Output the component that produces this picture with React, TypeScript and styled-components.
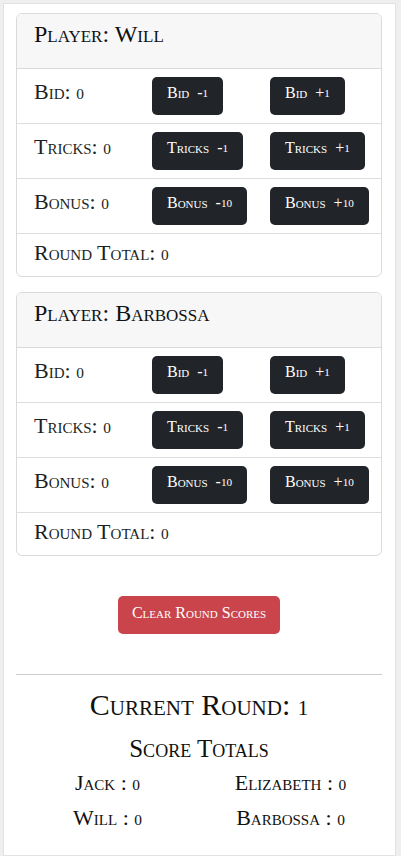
import React from "react";
import styled, { createGlobalStyle } from "styled-components";

const GlobalStyle = createGlobalStyle`
  html, body {
    margin: 0;
    padding: 0;
    background: #efefef;
  }
  body {
    font-family: "Liberation Serif", "Times New Roman", serif;
    font-variant: small-caps;
    color: #1c1f23;
  }
  * { box-sizing: border-box; }
`;

const Page = styled.div`
  width: 393px;
  margin: 3px;
  background: #ffffff;
  border: 1px solid #e2e2e2;
  padding: 9px 13px 20px 12px;
`;

const PlayerCard = styled.section`
  border: 1px solid #dadada;
  border-radius: 6px;
  overflow: hidden;
  & + & {
    margin-top: 15px;
  }
`;

const CardHeader = styled.h4`
  margin: 0;
  background: #f7f7f7;
  border-bottom: 1px solid #dadada;
  padding: 5px 17px 19px;
  font-size: 24px;
  line-height: 30px;
  font-weight: normal;
  color: #111;
`;

const Row = styled.div<{ $last?: boolean }>`
  display: grid;
  grid-template-columns: 118px 118px 1fr;
  align-items: center;
  padding: ${(p) => (p.$last ? "6px 17px 8px" : "8px 17px")};
  border-bottom: ${(p) => (p.$last ? "none" : "1px solid #dedede")};
`;

const Label = styled.div<{ $last?: boolean }>`
  font-size: 22px;
  line-height: 26px;
  margin-bottom: ${(p) => (p.$last ? "0" : "6px")};
  white-space: nowrap;
  grid-column: ${(p) => (p.$last ? "1 / -1" : "auto")};
`;

const Num = styled.span`
  font-size: 0.7em;
`;

const ActionButton = styled.button`
  justify-self: start;
  height: 38px;
  padding: 0 15px 6px;
  border: none;
  border-radius: 5px;
  background: #212529;
  color: #ffffff;
  font-family: "Liberation Serif", "Times New Roman", serif;
  font-variant: small-caps;
  font-size: 16px;
  white-space: nowrap;
  cursor: pointer;
  display: flex;
  align-items: center;
`;

const ClearWrap = styled.div`
  display: flex;
  justify-content: center;
  padding: 40px 0;
`;

const ClearButton = styled.button`
  height: 38px;
  padding: 0 14px 4px;
  border: none;
  border-radius: 5px;
  background: #c9454b;
  color: #ffffff;
  font-family: "Liberation Serif", "Times New Roman", serif;
  font-variant: small-caps;
  font-size: 16px;
  cursor: pointer;
`;

const Divider = styled.hr`
  margin: 0 0 12px;
  border: none;
  border-top: 1px solid #cccccc;
`;

const RoundTitle = styled.h2`
  margin: 0 0 8px;
  text-align: center;
  font-size: 30px;
  line-height: 36px;
  font-weight: normal;
  color: #111;
`;

const TotalsTitle = styled.h4`
  margin: 0 0 2px;
  text-align: center;
  font-size: 25px;
  line-height: 29px;
  font-weight: normal;
  color: #111;
`;

const TotalsGrid = styled.div`
  display: grid;
  grid-template-columns: 1fr 1fr;
  grid-auto-rows: 35px;
`;

const TotalCell = styled.div`
  text-align: center;
  font-size: 22px;
  line-height: 35px;
  color: #111;
`;

type Player = { name: string; bid: number; tricks: number; bonus: number };

const players: Player[] = [
  { name: "Will", bid: 0, tricks: 0, bonus: 0 },
  { name: "Barbossa", bid: 0, tricks: 0, bonus: 0 },
];

const totals = [
  { name: "Jack", score: 0 },
  { name: "Elizabeth", score: 0 },
  { name: "Will", score: 0 },
  { name: "Barbossa", score: 0 },
];

function PlayerPanel({ p }: { p: Player }) {
  return (
    <PlayerCard>
      <CardHeader>Player: {p.name}</CardHeader>
      <Row>
        <Label>
          Bid: <Num>{p.bid}</Num>
        </Label>
        <ActionButton>
          Bid&nbsp;&nbsp;-<Num>1</Num>
        </ActionButton>
        <ActionButton>
          Bid&nbsp;&nbsp;+<Num>1</Num>
        </ActionButton>
      </Row>
      <Row>
        <Label>
          Tricks: <Num>{p.tricks}</Num>
        </Label>
        <ActionButton>
          Tricks&nbsp;&nbsp;-<Num>1</Num>
        </ActionButton>
        <ActionButton>
          Tricks&nbsp;&nbsp;+<Num>1</Num>
        </ActionButton>
      </Row>
      <Row>
        <Label>
          Bonus: <Num>{p.bonus}</Num>
        </Label>
        <ActionButton>
          Bonus&nbsp;&nbsp;-<Num>10</Num>
        </ActionButton>
        <ActionButton>
          Bonus&nbsp;&nbsp;+<Num>10</Num>
        </ActionButton>
      </Row>
      <Row $last>
        <Label $last>
          Round Total: <Num>{p.bid + p.tricks + p.bonus}</Num>
        </Label>
      </Row>
    </PlayerCard>
  );
}

export default function App() {
  return (
    <>
      <GlobalStyle />
      <Page>
        {players.map((p) => (
          <PlayerPanel key={p.name} p={p} />
        ))}
        <ClearWrap>
          <ClearButton>Clear Round Scores</ClearButton>
        </ClearWrap>
        <Divider />
        <RoundTitle>
          Current Round: <Num>1</Num>
        </RoundTitle>
        <TotalsTitle>Score Totals</TotalsTitle>
        <TotalsGrid>
          {totals.map((t) => (
            <TotalCell key={t.name}>
              {t.name} : <Num>{t.score}</Num>
            </TotalCell>
          ))}
        </TotalsGrid>
      </Page>
    </>
  );
}
